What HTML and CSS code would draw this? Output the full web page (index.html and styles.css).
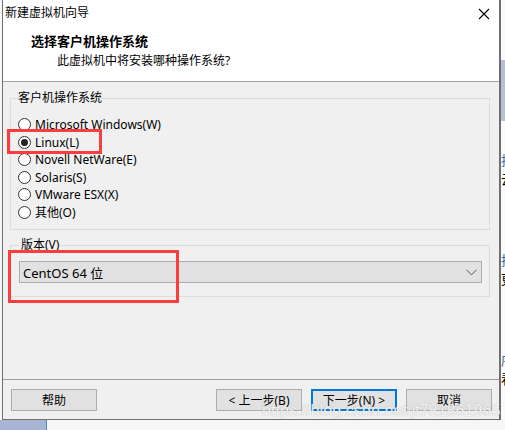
FILE: index.html
```html
<!DOCTYPE html>
<html lang="zh-CN">
<head>
    <meta charset="UTF-8">
    <meta name="viewport" content="width=device-width, initial-scale=1.0">
    <title>新建虚拟机向导</title>
    <link rel="stylesheet" href="styles.css">
</head>
<body>
    <div class="desk">
        <div class="window">
            <div class="titlebar">
                <span class="title">新建虚拟机向导</span>
                <svg class="close" width="12" height="12" viewBox="0 0 12 12">
                    <path d="M1 1 L11 11 M11 1 L1 11" stroke="#000" stroke-width="1.1" fill="none"/>
                </svg>
            </div>

            <div class="header">
                <div class="head-title">选择客户机操作系统</div>
                <div class="head-sub">此虚拟机中将安装哪种操作系统?</div>
            </div>

            <div class="main">
                <fieldset class="group">
                    <legend>客户机操作系统</legend>
                    <div class="radio"><span class="dot"></span>Microsoft Windows(W)</div>
                    <div class="radio"><span class="dot checked"></span>Linux(L)</div>
                    <div class="radio"><span class="dot"></span>Novell NetWare(E)</div>
                    <div class="radio"><span class="dot"></span>Solaris(S)</div>
                    <div class="radio"><span class="dot"></span>VMware ESX(X)</div>
                    <div class="radio"><span class="dot"></span>其他(O)</div>
                </fieldset>

                <fieldset class="group version">
                    <legend>版本(V)</legend>
                    <div class="select">
                        <span>CentOS 64 位</span>
                        <svg width="11" height="7" viewBox="0 0 11 7">
                            <path d="M0.5 0.8 L5.5 5.8 L10.5 0.8" stroke="#555" stroke-width="1" fill="none"/>
                        </svg>
                    </div>
                </fieldset>
            </div>

            <div class="footer">
                <button class="btn">帮助</button>
                <div class="spacer"></div>
                <button class="btn">&lt; 上一步(B)</button>
                <button class="btn primary">下一步(N) &gt;</button>
                <button class="btn">取消</button>
            </div>
        </div>

        <!-- window behind the dialog, only its left edge shows -->
        <div class="side">
            <div class="side-band"></div>
            <div class="side-item"><span class="link">指</span><span>云</span></div>
            <div class="side-item"><span class="link">排</span><span>更</span></div>
            <div class="side-item"><span class="link">序</span><span>看</span></div>
        </div>
    </div>
    <div class="bottom">
        <div class="bottom-left"></div>
    </div>

    <!-- marks drawn on top of the dialog -->
    <div class="mark mark-linux"></div>
    <div class="mark mark-version"></div>
    <div class="watermark">https://blog.csdn.net/jt781861965</div>
</body>
</html>
```

FILE: styles.css
```css
body {
    margin: 0;
    width: 505px;
    height: 430px;
    overflow: hidden;
    background: #f6f6f7;
    font-family: "Noto Sans", "Noto Sans CJK SC", sans-serif;
    font-size: 12px;
    color: #000;
}
.desk {
    display: flex;
    height: 420px;
}
.window {
    flex-shrink: 0;
    width: 496px;
    height: 419px;
    margin-left: 2px;
    border-left: 1px solid #6f6f6f;
    border-right: 2px solid #6f6f6f;
    border-bottom: 1px solid #6f6f6f;
    background: #f0f0f0;
    display: flex;
    flex-direction: column;
}
.titlebar {
    height: 26px;
    flex-shrink: 0;
    background: #fff;
    display: flex;
    align-items: center;
    justify-content: space-between;
    padding: 0 9px 0 2px;
}
.title {
    line-height: 26px;
}
.close {
    margin-top: 1px;
}
.header {
    height: 56px;
    flex-shrink: 0;
    box-sizing: border-box;
    background: #fff;
    border-bottom: 1px solid #a0a0a0;
    padding: 6px 0 0 28px;
}
.head-title {
    font-weight: bold;
    font-size: 13px;
    line-height: 18px;
}
.head-sub {
    margin: 2px 0 0 26px;
    line-height: 18px;
}
.main {
    height: 298px;
    flex-shrink: 0;
    box-sizing: border-box;
    border-bottom: 1px solid #a0a0a0;
    padding: 8px 9px 0 7px;
}
.group {
    margin: 0;
    border: 1px solid #dcdcdc;
    padding: 10px 7px 8px 7px;
}
.group legend {
    padding: 0;
    line-height: 16px;
}
.radio {
    height: 17.5px;
    display: flex;
    align-items: center;
    white-space: nowrap;
}
.dot {
    width: 11px;
    height: 11px;
    border: 1px solid #333;
    border-radius: 50%;
    background: #fff;
    margin-right: 4px;
    display: flex;
    align-items: center;
    justify-content: center;
}
.dot.checked::after {
    content: "";
    width: 7px;
    height: 7px;
    border-radius: 50%;
    background: #222;
}
.version {
    margin-top: 7px;
    padding: 8px 7px 13px 8px;
}
.version legend {
    padding-left: 2px;
}
.select {
    height: 22px;
    box-sizing: border-box;
    border: 1px solid #adadad;
    background: #e1e1e1;
    display: flex;
    align-items: center;
    justify-content: space-between;
    padding: 0 4px 0 3px;
    font-size: 13px;
}
.footer {
    flex: 1;
    display: flex;
    align-items: flex-start;
    gap: 9px;
    padding: 9px 7px 0 8px;
}
.spacer {
    flex: 1;
}
.btn {
    width: 86px;
    height: 22px;
    margin: 0;
    padding: 0;
    border: 1px solid #adadad;
    background: #e1e1e1;
    font-family: inherit;
    font-size: 12px;
    color: #000;
}
.btn.primary {
    border: 2px solid #0078d7;
}
.side {
    flex: 1;
    min-width: 0;
    overflow: hidden;
    background: #fafafa;
    display: flex;
    flex-direction: column;
    padding-top: 60px;
    gap: 62px;
}
.side-band {
    height: 61px;
    margin-bottom: -32px;
    background: #b7bfd6;
}
.side-item {
    display: flex;
    flex-direction: column;
    font-size: 13px;
    line-height: 19px;
    white-space: nowrap;
}
.link {
    color: #2e6aa8;
}
.bottom {
    height: 10px;
    display: flex;
}
.bottom-left {
    width: 46px;
    background: #a9b4d3;
    border-right: 1px solid #3f8fcf;
}
.mark {
    position: absolute;
    border: 3px solid #fc3d3d;
    box-sizing: border-box;
}
.mark-linux {
    left: 7px;
    top: 129px;
    width: 95px;
    height: 25px;
}
.mark-version {
    left: 8px;
    top: 250px;
    width: 171px;
    height: 53px;
}
.watermark {
    position: absolute;
    left: 262px;
    top: 401px;
    font-family: "Liberation Sans", Arial, sans-serif;
    font-size: 16.2px;
    color: rgba(255, 255, 255, 0.85);
    text-shadow: 0 0 1px rgba(120, 120, 120, 0.6);
    white-space: nowrap;
}
```
